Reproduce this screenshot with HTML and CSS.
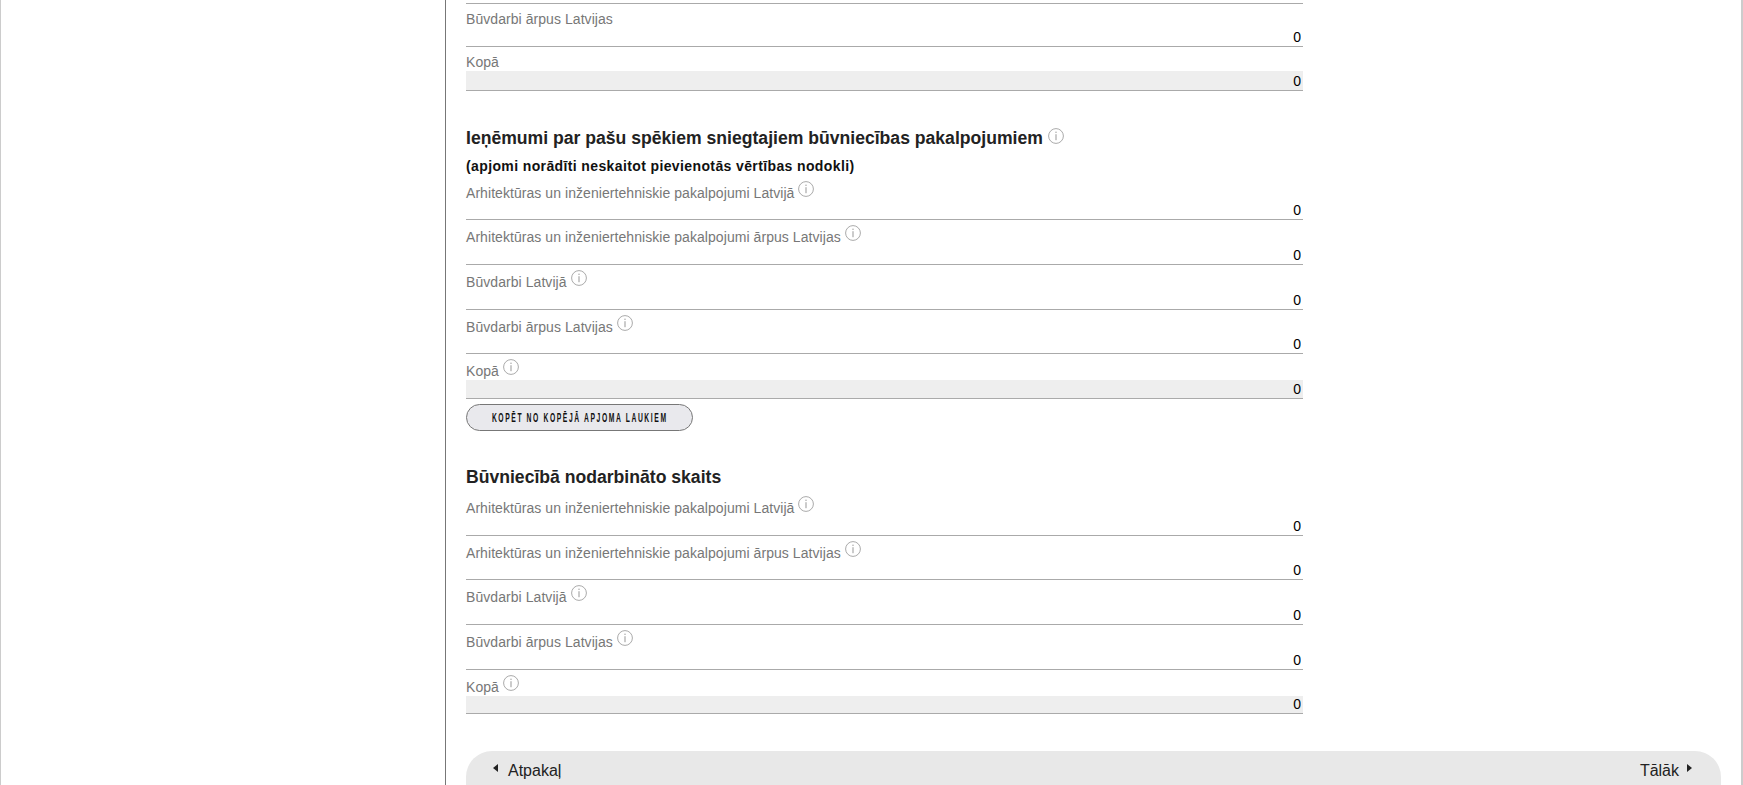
FILE: index.html
```html
<!DOCTYPE html>
<html lang="lv">
<head>
    <meta charset="UTF-8">
    <meta name="viewport" content="width=device-width, initial-scale=1.0">
    <title>Būvniecības apjomi</title>
    <link rel="stylesheet" href="styles.css">
</head>
<body>
    <svg class="icon-defs" width="0" height="0">
        <symbol id="info" viewBox="0 0 16 16">
            <circle cx="8" cy="8" r="7.4" fill="none" stroke="#aaa" stroke-width="1"/>
            <rect x="7.4" y="3.6" width="1.2" height="1.4" fill="#aaa"/>
            <rect x="7.4" y="6.2" width="1.2" height="6" fill="#aaa"/>
        </symbol>
    </svg>
    <div class="page">
        <div class="sidebar"></div>
        <div class="main">
            <div class="form-area">
                <div class="cut-row"></div>
                <div class="form-row plain">
                    <label>Būvdarbi ārpus Latvijas</label>
                    <input class="value" type="text" value="0">
                </div>
                <div class="form-row plain total">
                    <label>Kopā</label>
                    <input class="value" type="text" value="0" readonly>
                </div>

                <h3 class="section-title first">Ieņēmumi par pašu spēkiem sniegtajiem būvniecības pakalpojumiem <svg class="info"><use href="#info"/></svg></h3>
                <p class="section-note">(apjomi norādīti neskaitot pievienotās vērtības nodokli)</p>
                <div class="form-row">
                    <label>Arhitektūras un inženiertehniskie pakalpojumi Latvijā <svg class="info"><use href="#info"/></svg></label>
                    <input class="value" type="text" value="0">
                </div>
                <div class="form-row">
                    <label>Arhitektūras un inženiertehniskie pakalpojumi ārpus Latvijas <svg class="info"><use href="#info"/></svg></label>
                    <input class="value" type="text" value="0">
                </div>
                <div class="form-row">
                    <label>Būvdarbi Latvijā <svg class="info"><use href="#info"/></svg></label>
                    <input class="value" type="text" value="0">
                </div>
                <div class="form-row">
                    <label>Būvdarbi ārpus Latvijas <svg class="info"><use href="#info"/></svg></label>
                    <input class="value" type="text" value="0">
                </div>
                <div class="form-row total">
                    <label>Kopā <svg class="info"><use href="#info"/></svg></label>
                    <input class="value" type="text" value="0" readonly>
                </div>
                <button class="copy-btn" type="button"><span>Kopēt no kopējā apjoma laukiem</span></button>

                <h3 class="section-title second">Būvniecībā nodarbināto skaits</h3>
                <div class="form-row">
                    <label>Arhitektūras un inženiertehniskie pakalpojumi Latvijā <svg class="info"><use href="#info"/></svg></label>
                    <input class="value" type="text" value="0">
                </div>
                <div class="form-row">
                    <label>Arhitektūras un inženiertehniskie pakalpojumi ārpus Latvijas <svg class="info"><use href="#info"/></svg></label>
                    <input class="value" type="text" value="0">
                </div>
                <div class="form-row">
                    <label>Būvdarbi Latvijā <svg class="info"><use href="#info"/></svg></label>
                    <input class="value" type="text" value="0">
                </div>
                <div class="form-row">
                    <label>Būvdarbi ārpus Latvijas <svg class="info"><use href="#info"/></svg></label>
                    <input class="value" type="text" value="0">
                </div>
                <div class="form-row total">
                    <label>Kopā <svg class="info"><use href="#info"/></svg></label>
                    <input class="value" type="text" value="0" readonly>
                </div>
            </div>
            <div class="nav-bar">
                <a class="nav-link" href="#"><span class="arrow-left"></span>Atpakaļ</a>
                <a class="nav-link" href="#">Tālāk<span class="arrow-right"></span></a>
            </div>
        </div>
    </div>
</body>
</html>
```
FILE: styles.css
```css
html, body {
    height: 100%;
    margin: 0;
    overflow: hidden;
}
body {
    font-family: "Liberation Sans", Arial, sans-serif;
    font-size: 14px;
    background-color: #fff;
}
.icon-defs {
    display: block;
    height: 0;
}
.page {
    display: flex;
    height: 785px;
    overflow: hidden;
    border-left: 1px solid #ccc;
    border-right: 2px solid #ccc;
}
.sidebar {
    width: 444px;
    flex: none;
}
.main {
    flex: 1;
    border-left: 1px solid #777;
    padding: 0 20px;
}
.form-area {
    width: 837px;
}
.cut-row {
    height: 3px;
    border-bottom: 1px solid #aaa;
}
.form-row {
    height: 44.7px;
    box-sizing: border-box;
    display: flex;
    flex-direction: column;
    justify-content: flex-end;
}
.form-row.plain {
    height: 43px;
}
.form-row.plain.total {
    height: 44px;
}
.form-row label {
    flex: 1;
    color: #777;
    line-height: 17px;
    padding-top: 5px;
    letter-spacing: 0.06px;
    white-space: nowrap;
}
.form-row.plain label {
    padding-top: 7px;
}
.value {
    display: block;
    width: 100%;
    height: 20px;
    box-sizing: border-box;
    padding: 0 2px 0 0;
    border: none;
    border-bottom: 1px solid #aaa;
    background: transparent;
    font-family: "Liberation Sans", Arial, sans-serif;
    font-size: 14px;
    color: #000;
    text-align: right;
    outline: none;
}
.total .value {
    background-color: #eee;
}
.info {
    width: 16px;
    height: 16px;
    vertical-align: 1px;
}
.section-title {
    margin: 0;
    font-size: 17.6px;
    line-height: 22px;
    color: #222;
}
.section-title .info {
    vertical-align: 0;
}
.section-title.first {
    margin-top: 36px;
}
.section-title.second {
    margin: 35px 0 2.9px;
}
.section-note {
    margin: 7.5px 0 1px;
    font-size: 14px;
    font-weight: bold;
    line-height: 18px;
    letter-spacing: 0.38px;
    color: #111;
}
.copy-btn {
    display: flex;
    justify-content: center;
    align-items: center;
    width: 227px;
    height: 27px;
    margin-top: 5px;
    padding: 0;
    border: 1px solid #777;
    border-radius: 14px;
    background-color: #e9e9ed;
    overflow: hidden;
}
.copy-btn span {
    flex: none;
    font-family: "Liberation Sans", sans-serif;
    font-size: 13.5px;
    font-weight: bold;
    letter-spacing: 3.2px;
    text-transform: uppercase;
    white-space: nowrap;
    color: #111;
    transform: scaleX(0.5);
}
.nav-bar {
    display: flex;
    justify-content: space-between;
    align-items: flex-start;
    height: 60px;
    box-sizing: border-box;
    margin-top: 36.6px;
    padding: 11px 29px 0 25px;
    border-radius: 26px;
    background-color: #e8e8e8;
}
.nav-link {
    color: #222;
    font-size: 16px;
    line-height: 18px;
    text-decoration: none;
    display: flex;
    align-items: center;
}
.arrow-left {
    width: 0;
    height: 0;
    margin: -5px 10px 0 2px;
    border-top: 4px solid transparent;
    border-bottom: 4px solid transparent;
    border-right: 5px solid #222;
}
.arrow-right {
    width: 0;
    height: 0;
    margin: -5px 0 0 8px;
    border-top: 4px solid transparent;
    border-bottom: 4px solid transparent;
    border-left: 5px solid #222;
}
```
